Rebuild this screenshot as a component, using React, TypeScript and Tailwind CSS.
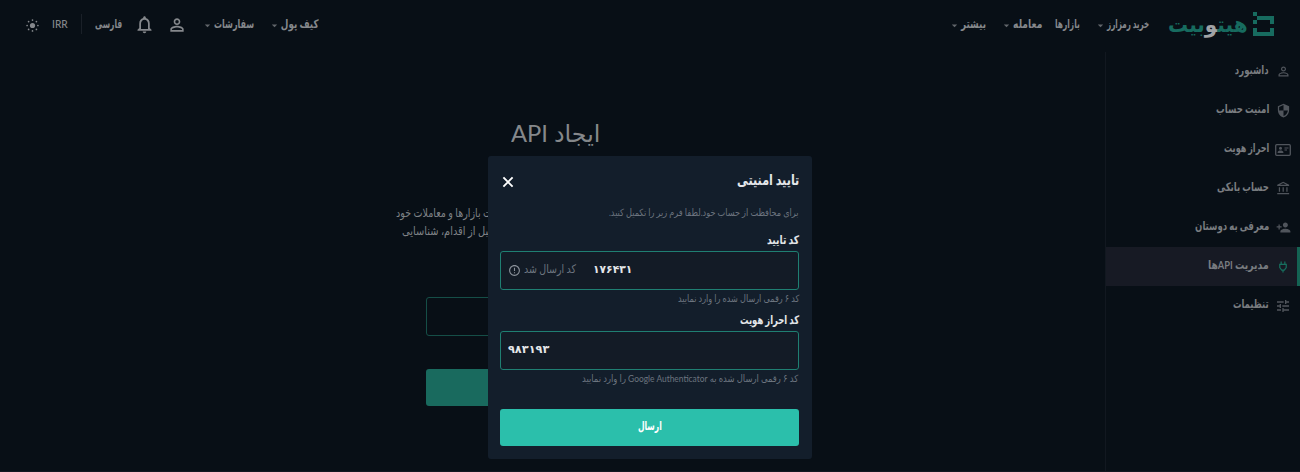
import { useLayoutEffect, useRef, useState, type ReactNode } from 'react';
import {
  MdPersonOutline,
  MdNotificationsNone,
  MdSecurity,
  MdOutlineAccountBalance,
  MdPersonAddAlt1,
  MdTune,
  MdArrowDropDown,
  MdErrorOutline,
} from 'react-icons/md';

/** One line of text, condensed or widened to fill the given width. */
function Fit({ w, className = '', children }: { w: number; className?: string; children: ReactNode }) {
  const ref = useRef<HTMLSpanElement>(null);
  const [scale, setScale] = useState(1);
  useLayoutEffect(() => {
    if (ref.current && ref.current.offsetWidth) setScale(w / ref.current.offsetWidth);
  }, [w]);
  return (
    <span className={`block shrink-0 whitespace-nowrap ${className}`} style={{ width: w }}>
      <span ref={ref} className="inline-block origin-right" style={{ transform: `scaleX(${scale})` }}>
        {children}
      </span>
    </span>
  );
}

function NavItem({ label, w, menu = false }: { label: string; w: number; menu?: boolean }) {
  return (
    <div className="flex items-center">
      <Fit w={w} className="text-[12px] leading-[18px] font-bold">{label}</Fit>
      {menu && <MdArrowDropDown className="-ml-[2px] mt-[3px] size-[13px] text-[#62666b]" />}
    </div>
  );
}

function Logo() {
  return (
    <div className="flex items-center gap-[5px]">
      <svg className="h-[24px] w-[21px]" viewBox="0 0 21 24" fill="#176b5f">
        <path d="M0 0h4v4H0zM4 4h17v8h-4V8H4zM0 8h4v4H0zM0 16h4v4h13v-4h4v8H0z" />
      </svg>
      <Fit w={80} className="mb-[1px] text-[22px] leading-[24px] font-bold text-[#176b5f]">
        هیت<span className="text-[#a0a3a6]">و</span>بیت
      </Fit>
    </div>
  );
}

function Sun() {
  return (
    <svg viewBox="0 0 13 13" className="mr-[12px] mt-[2px] size-[13px]" fill="currentColor">
      <circle cx="6.5" cy="6.5" r="2.6" />
      <circle cx="6.5" cy="1.1" r=".85" />
      <circle cx="6.5" cy="11.9" r=".85" />
      <circle cx="1.1" cy="6.5" r=".85" />
      <circle cx="11.9" cy="6.5" r=".85" />
      <circle cx="2.6" cy="2.6" r=".85" />
      <circle cx="10.4" cy="2.6" r=".85" />
      <circle cx="2.6" cy="10.4" r=".85" />
      <circle cx="10.4" cy="10.4" r=".85" />
    </svg>
  );
}

function IdCard() {
  return (
    <svg viewBox="0 0 16 12" className="h-3 w-4" fill="none" stroke="currentColor">
      <rect x=".7" y=".7" width="14.6" height="10.6" rx="1" strokeWidth="1.3" />
      <circle cx="5.5" cy="4.3" r="1.5" fill="currentColor" stroke="none" />
      <path d="M2.6 9V8.4C2.6 7 4.2 6.5 5.5 6.5S8.4 7 8.4 8.4V9z" fill="currentColor" stroke="none" />
      <path d="M9.5 4h4M9.5 6h2.5" />
    </svg>
  );
}

function Plug() {
  return (
    <svg viewBox="0 0 10 13" className="h-[12px] w-[10px]" fill="none" stroke="#17705f" strokeWidth="1.3">
      <path d="M3 .5v3M7 .5v3M1.5 3.6h7v3.6L6.4 9.8H3.6L1.5 7.2zM5 9.8v2.7" />
    </svg>
  );
}

const sideItems = [
  { label: 'داشبورد', w: 34, icon: <MdPersonOutline className="size-[15px]" /> },
  { label: 'امنیت حساب', w: 53, icon: <MdSecurity className="size-[15px]" /> },
  { label: 'احراز هویت', w: 45, icon: <IdCard /> },
  { label: 'حساب بانکی', w: 52, icon: <MdOutlineAccountBalance className="size-[15px]" /> },
  { label: 'معرفی به دوستان', w: 74, icon: <MdPersonAddAlt1 className="size-[15px] -scale-x-100" /> },
  { label: 'مدیریت APIها', w: 61, icon: <Plug />, active: true },
  { label: 'تنظیمات', w: 36, icon: <MdTune className="size-[16px]" /> },
];

function Header() {
  return (
    <header className="flex h-[52px] shrink-0 items-center justify-between px-[26px] pb-[4px] text-[#85888c]">
      <div className="flex items-center">
        <Logo />
        <div className="mr-[19px] flex items-center">
          <NavItem label="خرید رمزارز" w={42} menu />
          <div className="w-[16px]" />
          <NavItem label="بازارها" w={25} />
          <div className="w-[13px]" />
          <NavItem label="معامله" w={29} menu />
          <div className="w-[16px]" />
          <NavItem label="بیشتر" w={25} menu />
        </div>
      </div>
      <div className="flex items-center">
        <NavItem label="کیف پول" w={38} menu />
        <div className="w-[16px]" />
        <NavItem label="سفارشات" w={40} menu />
        <MdPersonOutline className="mt-[1px] mr-[16px] size-[20px]" />
        <MdNotificationsNone className="mt-[1px] mr-[12px] size-[21px]" />
        <Fit w={27} className="mr-[12px] text-[12px] leading-[18px] font-bold">فارسی</Fit>
        <div className="mr-[13px] h-5 w-px bg-[#1a2028]" />
        <Fit w={16} className="mr-[13px] text-[11.5px] leading-[18px] font-medium">IRR</Fit>
        <div className="w-px" />
        <Sun />
      </div>
    </header>
  );
}

function Sidebar() {
  return (
    <aside className="w-[195px] shrink-0 border-l border-[#121820]">
      {sideItems.map((it) => (
        <div
          key={it.label}
          className={`flex h-[39px] items-center border-r-[3px] pr-[6px] ${
            it.active ? 'border-[#146353] bg-[#171a24]' : 'border-transparent'
          }`}
        >
          <span className="flex w-4 justify-center text-[#50555c]">{it.icon}</span>
          <Fit w={it.w} className="mr-[6px] mb-[4px] text-[12px] leading-[18px] font-bold text-[#797c80]">
            {it.label}
          </Fit>
        </div>
      ))}
    </aside>
  );
}

function Page() {
  return (
    <main className="flex grow flex-col items-center">
      <Fit w={89} className="mt-[65px] ml-[6px] text-[24px] leading-[32px] text-[#85888b]">ایجاد API</Fit>
      <div className="mt-[55px] flex w-[313px] flex-col items-end text-[12px] leading-[18px] text-[#7f8286]">
        <Fit w={96}>ت بازارها و معاملات خود</Fit>
        <Fit w={91} className="ml-[6px]">قبل از اقدام، شناسایی</Fit>
      </div>
      <div className="mt-[57px] h-[39px] w-[254px] shrink-0 rounded-[3px] border border-[#154e47]" />
      <div className="mt-[33px] h-[37px] w-[254px] shrink-0 rounded-[3px] bg-[#196a5e]" />
    </main>
  );
}

function SecurityDialog() {
  return (
    <section className="absolute top-[156px] left-[488px] flex h-[303px] w-[324px] flex-col rounded-[3px] bg-[#131e2b] pr-[13px] pl-[12px] text-[#e4e6e9]">
      <div className="mt-[12px] flex h-[26px] shrink-0 items-center justify-between">
        <Fit w={62} className="mb-[4px] text-[15px] leading-[24px] font-bold">تایید امنیتی</Fit>
        <svg viewBox="0 0 12 12" className="mt-[1px] ml-[2px] size-[12px]" fill="none" stroke="white" strokeWidth="1.9">
          <path d="M1.4 1.4l9.2 9.2M10.6 1.4l-9.2 9.2" />
        </svg>
      </div>
      <Fit w={190} className="mt-[9px] text-[10px] leading-[18px] text-[#6c747f]">
        برای محافظت از حساب خود.لطفا فرم زیر را تکمیل کنید.
      </Fit>
      <Fit w={32} className="mt-[10px] text-[12px] leading-[18px] font-bold">کد تایید</Fit>
      <div className="mt-[2px] flex h-[39px] shrink-0 items-center justify-end rounded-[3px] border border-[#1f7f72] bg-[#131b26] pl-[7px]">
        <Fit w={39} className="mb-[4px] text-[11px] leading-[18px] font-bold">۱۷۶۴۳۱</Fit>
        <Fit w={52} className="mr-[17px] mb-[3px] text-[12px] leading-[18px] text-[#6c747f]">کد ارسال شد</Fit>
        <MdErrorOutline className="mr-[3px] mb-[1px] size-[13px] text-[#8a9099]" />
      </div>
      <Fit w={121} className="-mt-px text-[10px] leading-[18px] text-[#6c747f]">کد ۶ رقمی ارسال شده را وارد نمایید</Fit>
      <Fit w={59} className="mt-[4px] text-[12px] leading-[18px] font-bold">کد احراز هویت</Fit>
      <div className="mt-[2px] flex h-[39px] shrink-0 items-center justify-end rounded-[3px] border border-[#1f7f72] bg-[#131b26] pl-[7px]">
        <Fit w={41} className="mb-[4px] text-[11px] leading-[18px] font-bold">۹۸۳۱۹۳</Fit>
      </div>
      <Fit w={216} className="-mt-px mr-[1px] text-[10px] leading-[18px] text-[#6c747f]">
        کد ۶ رقمی ارسال شده به Google Authenticator را وارد نمایید
      </Fit>
      <button className="mt-[22px] flex h-[37px] shrink-0 items-center justify-center rounded-[3px] bg-[#2bbfab] text-white">
        <Fit w={24} className="mb-[4px] text-[12px] leading-[18px] font-bold">ارسال</Fit>
      </button>
    </section>
  );
}

export default function App() {
  return (
    <div
      dir="rtl"
      className="relative flex h-[472px] w-[1300px] flex-col overflow-hidden border-b border-[#141720] bg-[#080f16] font-['Lato','DejaVu_Sans',sans-serif]"
    >
      <Header />
      <div className="flex grow">
        <Sidebar />
        <Page />
      </div>
      <SecurityDialog />
    </div>
  );
}
